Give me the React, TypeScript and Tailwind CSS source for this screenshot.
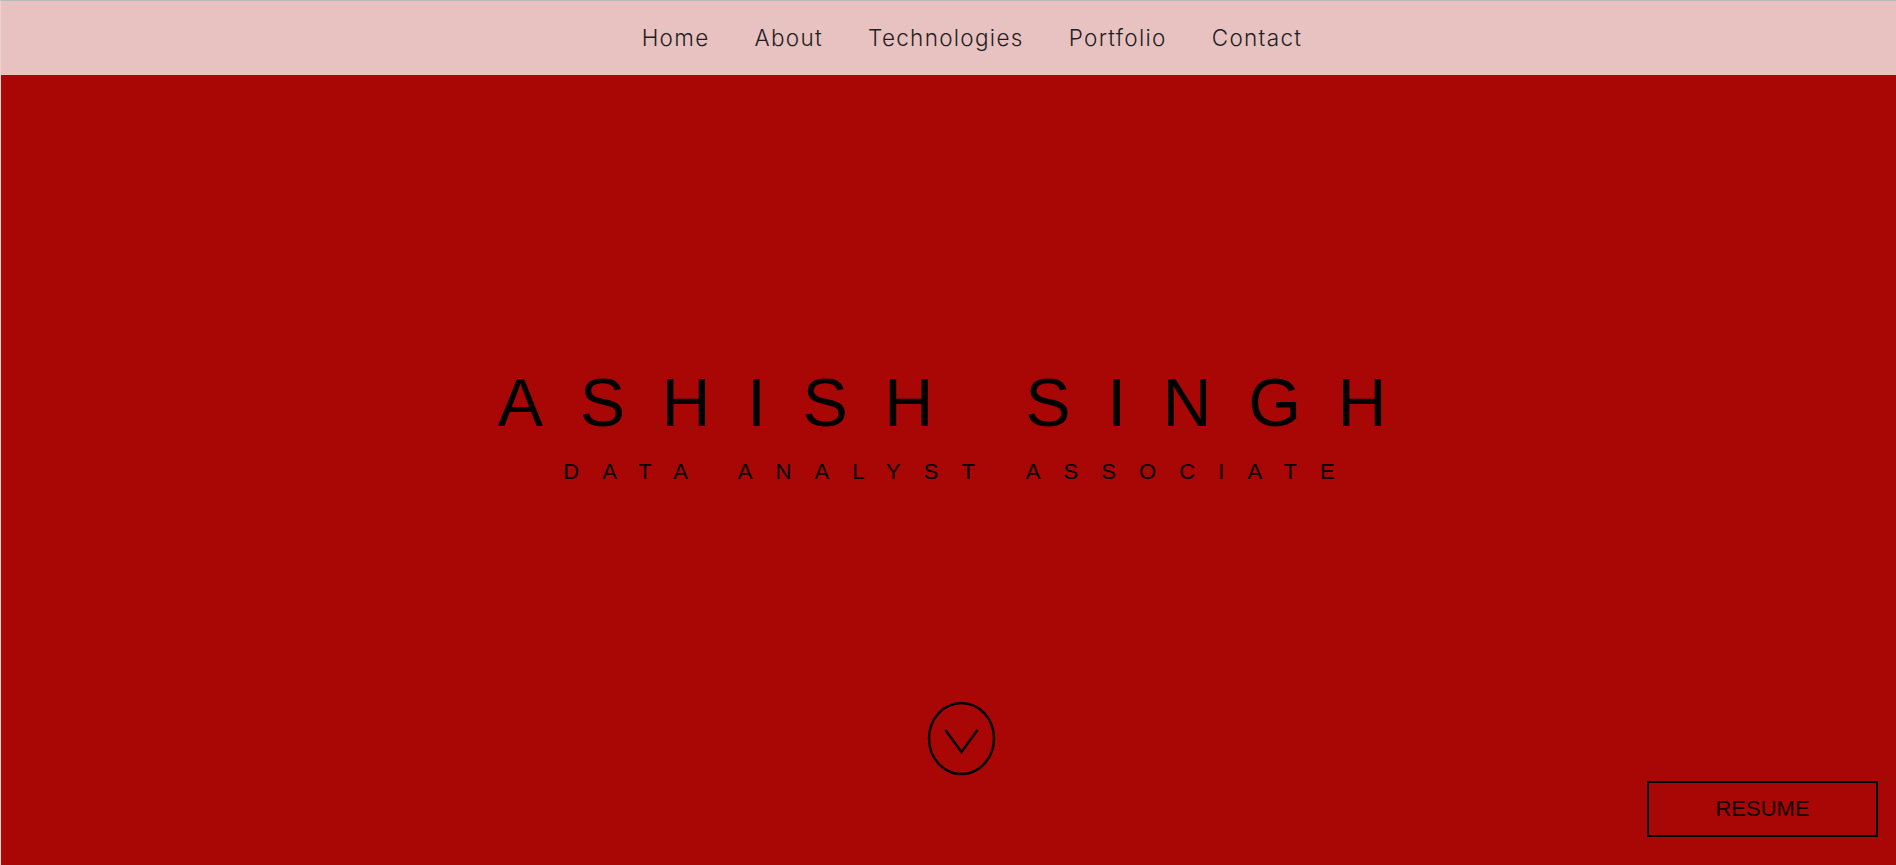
import React from "react";

const navItems = ["Home", "About", "Technologies", "Portfolio", "Contact"];

export default function App() {
  return (
    <div className="relative w-full h-[865px] overflow-hidden bg-[#a90606] border-t border-t-[#b9b9b9] border-l border-l-[#efcfcf]">
      <nav className="h-[74px] bg-[#e8c1c1] flex items-center justify-center pl-[47px]">
        <ul className="flex items-center gap-[45px] pt-[1px]">
          {navItems.map((item) => (
            <li
              key={item}
              className="text-[22.5px] leading-none font-light text-[#1e1e1e] tracking-[1.3px]"
              style={{ fontFamily: "Inter, 'Noto Sans', sans-serif" }}
            >
              {item}
            </li>
          ))}
        </ul>
      </nav>

      <section className="flex flex-col items-center pl-[24px] pt-[293px]">
        <h1
          className="text-[68px] leading-none font-normal text-black tracking-[36.5px] whitespace-nowrap"
          style={{ fontFamily: "'Liberation Sans', Arial, sans-serif" }}
        >
          ASHISH SINGH
        </h1>
        <h2
          className="mt-[25px] text-[22px] leading-none font-normal text-black tracking-[23.1px] whitespace-nowrap"
          style={{ fontFamily: "'Liberation Sans', Arial, sans-serif" }}
        >
          DATA ANALYST ASSOCIATE
        </h2>
        <div className="mt-[218px] mr-[-1px]">
          <svg width="69" height="75" viewBox="0 0 69 75" fill="none">
            <ellipse cx="34.5" cy="37.5" rx="32.5" ry="35.5" stroke="black" strokeWidth="2.4" />
            <polyline
              points="18.5,29 34.5,51 50.5,29"
              stroke="black"
              strokeWidth="2.4"
              fill="none"
              strokeLinecap="butt"
              strokeLinejoin="miter"
            />
          </svg>
        </div>
      </section>

      <button
        className="absolute right-[18px] bottom-[28px] w-[231px] h-[56px] border-2 border-black flex items-center justify-center text-[22px] leading-none text-[#120000]"
        style={{ fontFamily: "'Liberation Sans', Arial, sans-serif" }}
      >
        RESUME
      </button>
    </div>
  );
}
